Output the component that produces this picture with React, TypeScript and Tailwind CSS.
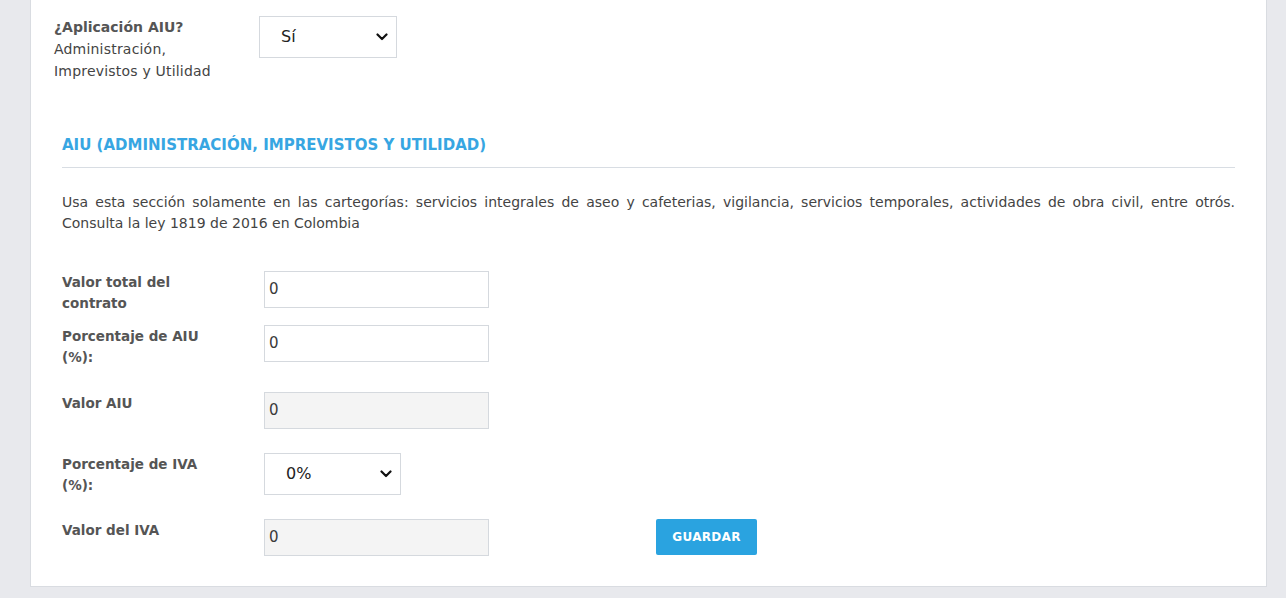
import React from "react";

const font = { fontFamily: '"DejaVu Sans", "Open Sans", sans-serif' };

function Chevron() {
  return (
    <svg width="12" height="8" viewBox="0 0 12 8" className="absolute right-[8px] top-1/2 -translate-y-1/2">
      <path d="M1.5 1.5 L6 6 L10.5 1.5" fill="none" stroke="#111" strokeWidth="2.2" strokeLinecap="round" strokeLinejoin="round" />
    </svg>
  );
}

function SelectBox({ value, w }: { value: string; w: string }) {
  return (
    <div className={`relative ${w} h-[42px] border border-[#d5d9de] bg-white flex items-center pl-[21px] text-[16px] text-[#222]`}>
      <span>{value}</span>
      <Chevron />
    </div>
  );
}

function Input({ disabled }: { disabled?: boolean }) {
  return (
    <div
      className={`w-[225px] h-[37px] border border-[#d5d9de] flex items-center pl-[4px] text-[15px] text-[#3a3a3a] ${
        disabled ? "bg-[#f4f4f4]" : "bg-white"
      }`}
    >
      0
    </div>
  );
}

function Label({ children }: { children: React.ReactNode }) {
  return (
    <div className="w-[202px] shrink-0">
      <div className="w-[150px] text-[13.5px] leading-[21px] font-bold text-[#555555] pt-[1px]">{children}</div>
    </div>
  );
}

export default function App() {
  return (
    <div className="w-[1286px] h-[598px] bg-[#e8e9ed] overflow-hidden" style={font}>
      <div className="ml-[30px] w-[1237px] h-[587px] bg-white border-l border-r border-b border-[#d9dce1] flex flex-col">
        {/* top section */}
        <div className="flex pl-[23px] pt-[16px]">
          <div className="w-[205px] text-[14px] leading-[22px] tracking-[0.2px] text-[#444]">
            <div className="font-bold text-[#555] tracking-normal">¿Aplicación AIU?</div>
            <div>Administración,</div>
            <div>Imprevistos y Utilidad</div>
          </div>
          <SelectBox value="Sí" w="w-[138px]" />
        </div>

        {/* AIU section */}
        <div className="px-[31px] mt-[53px]">
          <div className="text-[15px] font-bold text-[#37a6e2] leading-[20px] pb-[12px] border-b border-[#d8dde3]">
            AIU (ADMINISTRACIÓN, IMPREVISTOS Y UTILIDAD)
          </div>
          <div className="mt-[24px] text-[14px] leading-[21px] text-[#444]">
            <div className="text-justify [text-align-last:justify]">
              Usa esta sección solamente en las cartegorías: servicios integrales de aseo y cafeterias, vigilancia, servicios
              temporales, actividades de obra civil, entre otrós.
            </div>
            <div>Consulta la ley 1819 de 2016 en Colombia</div>
          </div>

          <div className="mt-[37px] flex flex-col">
            <div className="flex items-start h-[54px]">
              <Label>Valor total del contrato</Label>
              <Input />
            </div>
            <div className="flex items-start h-[67px]">
              <Label>Porcentaje de AIU (%):</Label>
              <Input />
            </div>
            <div className="flex items-start h-[61px]">
              <Label>Valor AIU</Label>
              <Input disabled />
            </div>
            <div className="flex items-start h-[66px]">
              <Label>Porcentaje de IVA (%):</Label>
              <SelectBox value="0%" w="w-[137px]" />
            </div>
            <div className="flex items-start">
              <Label>Valor del IVA</Label>
              <Input disabled />
              <button className="ml-[167px] w-[101px] h-[36px] bg-[#2aa3e0] rounded-[2px] text-white text-[12px] font-bold tracking-[0.3px]">
                GUARDAR
              </button>
            </div>
          </div>
        </div>
      </div>
    </div>
  );
}
